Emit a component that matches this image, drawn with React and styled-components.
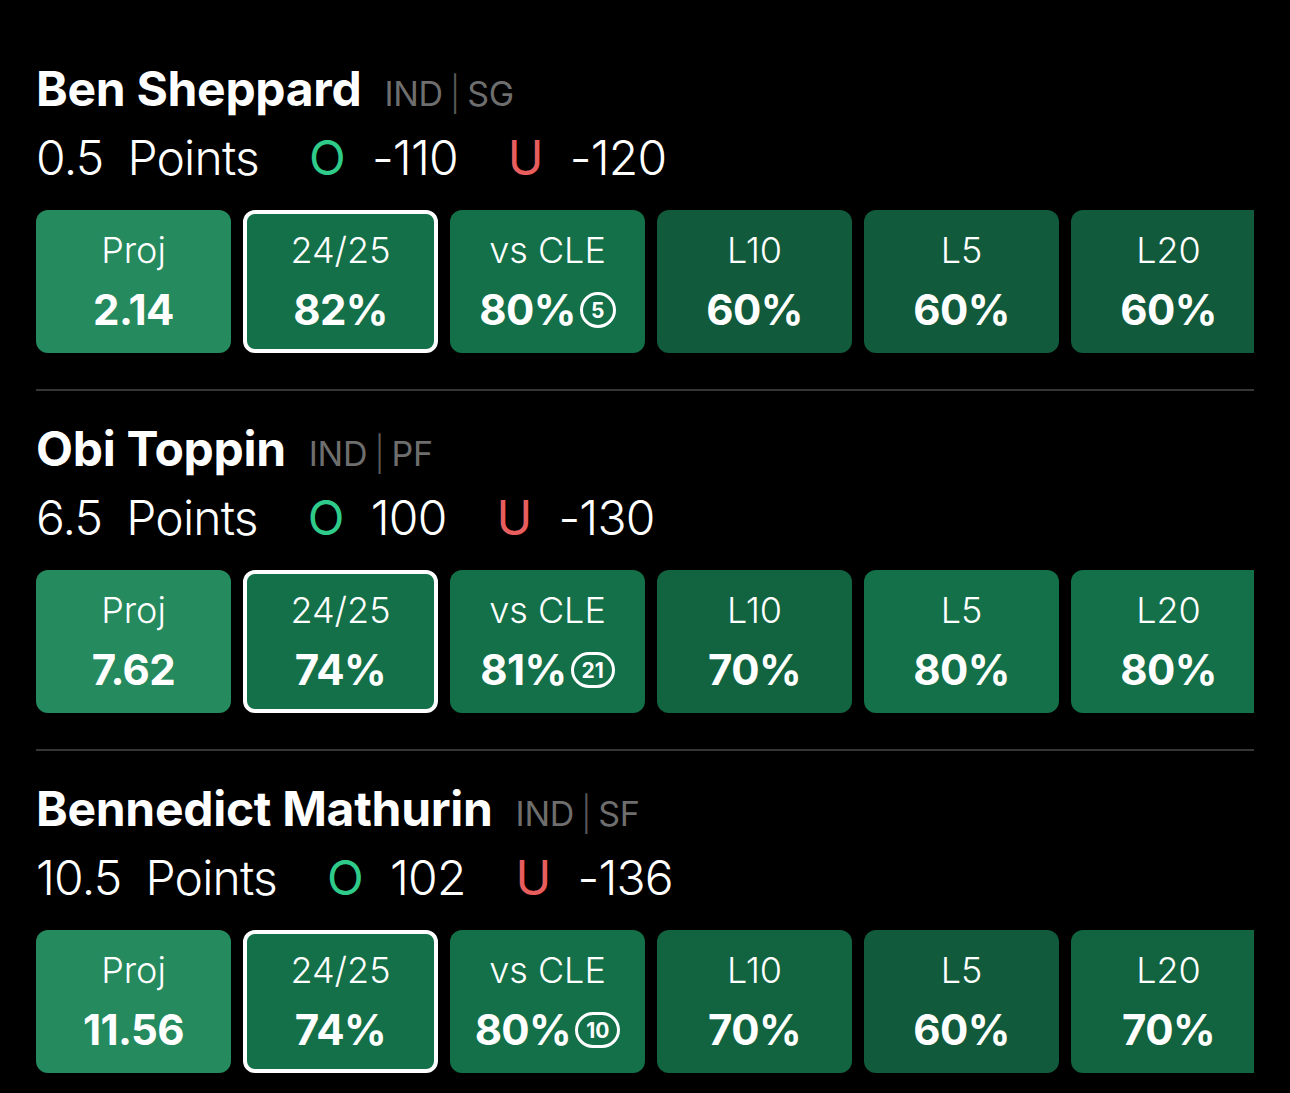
import React from "react";
import styled, { createGlobalStyle } from "styled-components";

const Global = createGlobalStyle`
  html, body { margin: 0; padding: 0; background: #000; }
  body { font-family: "Inter", "Noto Sans", "Liberation Sans", sans-serif; color: #fff; }
  * { box-sizing: border-box; }
`;

const Page = styled.div`
  width: 1290px;
  min-height: 1093px;
  background: #000;
  padding: 60px 36px 0 36px;
  display: flex;
  flex-direction: column;
`;

const Section = styled.section`
  display: flex;
  flex-direction: column;
`;

const NameRow = styled.div`
  display: flex;
  align-items: baseline;
  gap: 23px;
  height: 57px;
`;

const Name = styled.h2`
  margin: 0;
  font-size: 48px;
  line-height: 57px;
  font-weight: 700;
  letter-spacing: -0.3px;
  color: #fff;
`;

const Team = styled.span`
  display: flex;
  align-items: baseline;
  gap: 7px;
  font-size: 34px;
  font-weight: 400;
  color: #6e6e6e;
  letter-spacing: -0.3px;
`;

const Pipe = styled.span`
  font-weight: 300;
  color: #5a5a5a;
`;

const LineRow = styled.div`
  display: flex;
  align-items: baseline;
  margin-top: 12px;
  height: 58px;
  font-size: 48px;
  line-height: 58px;
  font-weight: 300;
  letter-spacing: -0.8px;
`;

const LineNum = styled.span`
  margin-right: 24px;
`;

const OddsGroup = styled.span`
  display: inline-flex;
  align-items: baseline;
  gap: 27px;
  margin-left: 50px;
`;

const Side = styled.span`
  color: ${(p) => (p.$over ? "#2fcb8b" : "#e85d5d")};
  font-weight: 400;
`;

const Cards = styled.div`
  display: flex;
  gap: 12px;
  margin-top: 23px;
  overflow: hidden;
  width: 100%;
`;

const Card = styled.div`
  flex: 0 0 195px;
  height: 143px;
  border-radius: 12px;
  background: ${(p) => p.$bg};
  border: ${(p) => (p.$active ? "4px solid #fff" : "none")};
  display: flex;
  flex-direction: column;
  align-items: center;
  padding-top: ${(p) => (p.$active ? "16px" : "20px")};
`;

const Label = styled.div`
  font-size: 36px;
  line-height: 40px;
  font-weight: 300;
  letter-spacing: 0;
  color: #fff;
`;

const Value = styled.div`
  margin-top: 15px;
  display: flex;
  align-items: center;
  gap: 4px;
  font-size: 42px;
  line-height: 50px;
  font-weight: 700;
  letter-spacing: -0.6px;
  color: #fff;
`;

const Badge = styled.span`
  display: inline-flex;
  align-items: center;
  justify-content: center;
  height: 36px;
  min-width: 36px;
  padding: 0 ${(p) => (p.$wide ? "8px" : "0")};
  border: 3px solid #fff;
  border-radius: 18px;
  font-size: 21px;
  line-height: 1;
  font-weight: 700;
  letter-spacing: 0;
`;

const Divider = styled.hr`
  margin: 36px 0 29px 0;
  border: none;
  height: 2px;
  background: #363636;
  width: 100%;
`;

const colorFor = (kind, v) => {
  if (kind === "proj") return "#258a5e";
  if (v >= 74) return "#137049";
  if (v >= 70) return "#12633f";
  return "#115a3b";
};

const players = [
  {
    name: "Ben Sheppard",
    team: "IND",
    pos: "SG",
    line: "0.5",
    over: "-110",
    under: "-120",
    proj: "2.14",
    season: 82,
    vs: 80,
    vsCount: "5",
    l10: 60,
    l5: 60,
    l20: 60,
  },
  {
    name: "Obi Toppin",
    team: "IND",
    pos: "PF",
    line: "6.5",
    over: "100",
    under: "-130",
    proj: "7.62",
    season: 74,
    vs: 81,
    vsCount: "21",
    l10: 70,
    l5: 80,
    l20: 80,
  },
  {
    name: "Bennedict Mathurin",
    team: "IND",
    pos: "SF",
    line: "10.5",
    over: "102",
    under: "-136",
    proj: "11.56",
    season: 74,
    vs: 80,
    vsCount: "10",
    l10: 70,
    l5: 60,
    l20: 70,
  },
];

function PlayerBlock({ p, last }) {
  const stats = [
    { label: "L10", v: p.l10 },
    { label: "L5", v: p.l5 },
    { label: "L20", v: p.l20 },
  ];
  return (
    <Section>
      <NameRow>
        <Name>{p.name}</Name>
        <Team>
          <span>{p.team}</span>
          <Pipe>|</Pipe>
          <span>{p.pos}</span>
        </Team>
      </NameRow>
      <LineRow>
        <LineNum>{p.line}</LineNum>
        <span>Points</span>
        <OddsGroup>
          <Side $over>O</Side>
          <span>{p.over}</span>
        </OddsGroup>
        <OddsGroup>
          <Side>U</Side>
          <span>{p.under}</span>
        </OddsGroup>
      </LineRow>
      <Cards>
        <Card $bg={colorFor("proj")}>
          <Label>Proj</Label>
          <Value>{p.proj}</Value>
        </Card>
        <Card $bg={colorFor("pct", p.season)} $active>
          <Label>24/25</Label>
          <Value>{p.season}%</Value>
        </Card>
        <Card $bg={colorFor("pct", p.vs)}>
          <Label>vs CLE</Label>
          <Value>
            {p.vs}%<Badge $wide={p.vsCount.length > 1}>{p.vsCount}</Badge>
          </Value>
        </Card>
        {stats.map((s) => (
          <Card key={s.label} $bg={colorFor("pct", s.v)}>
            <Label>{s.label}</Label>
            <Value>{s.v}%</Value>
          </Card>
        ))}
      </Cards>
      {!last && <Divider />}
    </Section>
  );
}

export default function App() {
  return (
    <>
      <Global />
      <Page>
        {players.map((p, i) => (
          <PlayerBlock key={p.name} p={p} last={i === players.length - 1} />
        ))}
      </Page>
    </>
  );
}
